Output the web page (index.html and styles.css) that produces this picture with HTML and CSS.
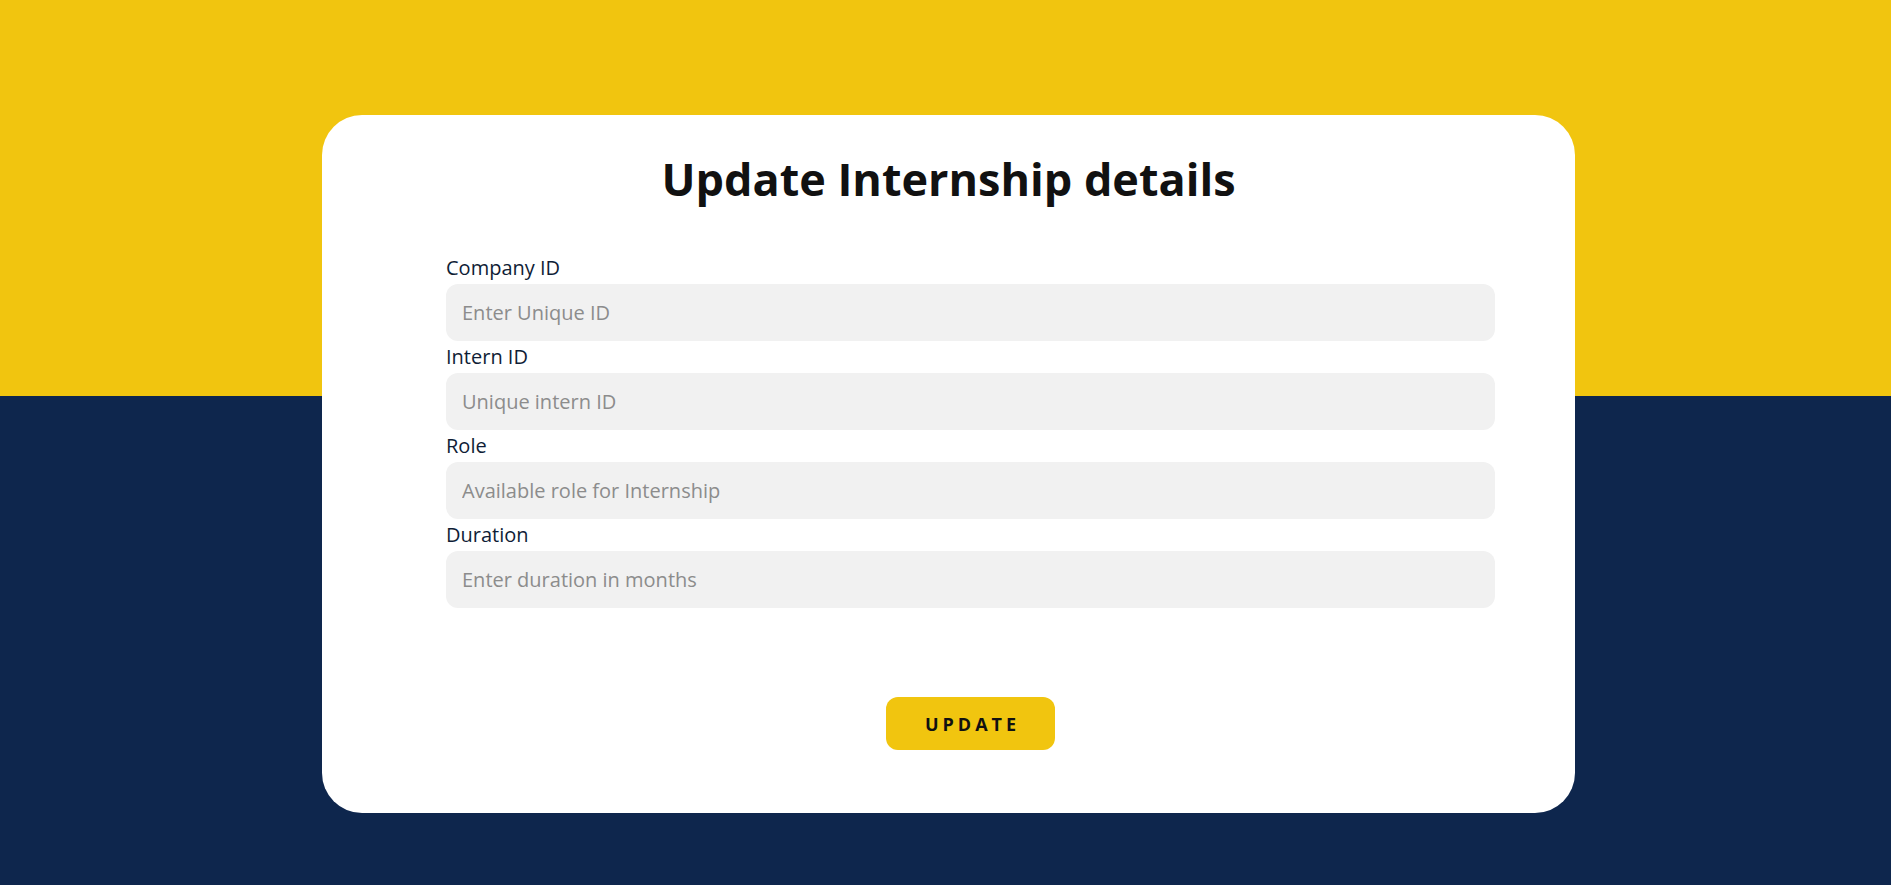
FILE: index.html
```html
<!DOCTYPE html>
<html lang="en">
<head>
<meta charset="utf-8">
<title>Update Internship details</title>
<link rel="stylesheet" href="styles.css">
</head>
<body>
<div class="page">
  <div class="band-top"></div>
  <div class="band-bottom"></div>
  <div class="stage">
    <div class="card">
      <h1 class="title">Update Internship details</h1>
      <form class="form">
        <label class="label" for="cid">Company ID</label>
        <input class="field" id="cid" type="text" placeholder="Enter Unique ID">
        <label class="label" for="iid">Intern ID</label>
        <input class="field" id="iid" type="text" placeholder="Unique intern ID">
        <label class="label" for="role">Role</label>
        <input class="field" id="role" type="text" placeholder="Available role for Internship">
        <label class="label" for="dur">Duration</label>
        <input class="field" id="dur" type="text" placeholder="Enter duration in months">
        <div class="actions">
          <button class="btn" type="button">UPDATE</button>
        </div>
      </form>
    </div>
  </div>
</div>
</body>
</html>
```
FILE: styles.css
```css
* { box-sizing: border-box; }
html, body { margin: 0; padding: 0; }
body {
  font-family: "Open Sans", "Noto Sans", sans-serif;
  background: #0e264d;
}
.page {
  position: relative;
  width: 100%;
  height: 885px;
  overflow: hidden;
  background: #0e264d;
}
.band-top {
  height: 396px;
  background: #f1c50f;
}
.band-bottom {
  height: 489px;
  background: #0e264d;
}
.stage {
  position: absolute;
  top: 0;
  left: 0;
  right: 0;
  padding: 115px 316px 0 322px;
}
.card {
  height: 698px;
  background: #ffffff;
  border-radius: 40px;
  padding: 33px 80px 0 124px;
}
.title {
  margin: 0 -80px 0 -124px;
  text-align: center;
  font-size: 45px;
  font-weight: 700;
  color: #111111;
  line-height: 62px;
}
.form {
  display: flex;
  flex-direction: column;
  margin-top: 44px;
}
.label {
  font-size: 20px;
  line-height: 27px;
  color: #0f1d36;
  margin-bottom: 3px;
}
.field {
  height: 57px;
  border: none;
  border-radius: 12px;
  background: #f1f1f1;
  padding: 0 16px;
  font-family: "Open Sans", "Noto Sans", sans-serif;
  font-size: 20px;
  color: #333;
  margin-bottom: 2px;
  outline: none;
}
.field::placeholder { color: #8c8c8c; }
.actions {
  display: flex;
  justify-content: center;
  margin-top: 87px;
}
.btn {
  width: 169px;
  height: 53px;
  border: none;
  border-radius: 12px;
  background: #f1c50f;
  font-family: "Open Sans", "Noto Sans", sans-serif;
  font-weight: 700;
  font-size: 18px;
  letter-spacing: 4px;
  padding: 0 0 0 4px;
  color: #111111;
}
```
